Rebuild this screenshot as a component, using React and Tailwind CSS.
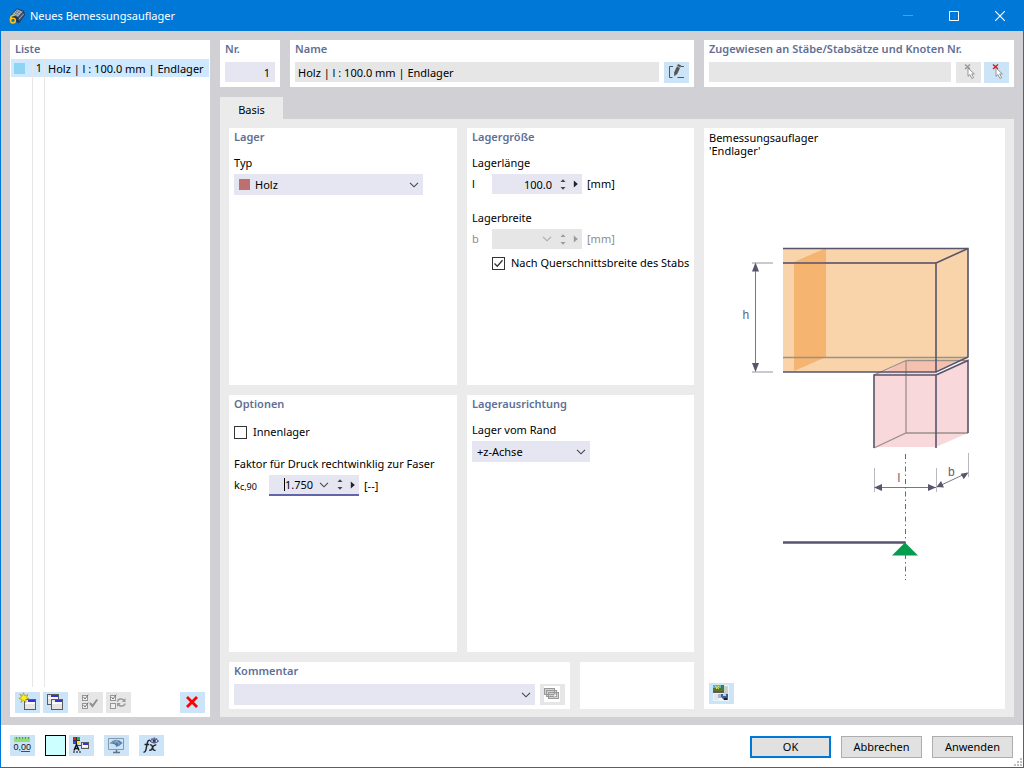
import React, { useState } from 'react';

function Panel({ title, className = '', children }) {
  return (
    <section className={`flex min-w-0 flex-col bg-white px-[5px] ${className}`}>
      {title && <h2 className="h-[19px] text-[11px] leading-[17px] font-semibold text-[#5f6f95]">{title}</h2>}
      {children}
    </section>
  );
}

function IconButton({ label, muted, children }) {
  return (
    <button
      type="button"
      aria-label={label}
      disabled={muted}
      className={`h-[21px] w-[25px] shrink-0 ${muted ? 'bg-[#e6e6e6]' : 'bg-[#cce4f7]'}`}
    >
      <svg width="25" height="21" viewBox="0 0 25 21" fill="none" aria-hidden="true">
        {children}
      </svg>
    </button>
  );
}

function Chevron({ className = '' }) {
  return (
    <svg width="10" height="6" viewBox="0 0 10 6" fill="none" className={className} aria-hidden="true">
      <path d="M1 .8 5 4.8 9 .8" stroke="currentColor" strokeWidth="1.1" />
    </svg>
  );
}

function Select({ id, label, swatch, options, className = '' }) {
  return (
    <div className={`relative flex h-[21px] items-center bg-[#e6e6f2] ${className}`}>
      {swatch && <span className="ml-[5px] size-[11px] shrink-0 bg-[#bc7070]" />}
      <select id={id} aria-label={label} className="h-full min-w-0 flex-1 appearance-none bg-transparent pr-5 pl-[5px] outline-none">
        {options.map((o) => (
          <option key={o}>{o}</option>
        ))}
      </select>
      <Chevron className="pointer-events-none absolute right-1 text-[#444]" />
    </div>
  );
}

function NumberField({ id, value, unit, disabled, list, focus, labelClass, children }) {
  return (
    <div className={`flex items-center ${disabled ? 'text-[#8c8c8c]' : ''}`}>
      <label htmlFor={id} className={`shrink-0 ${labelClass}`}>{children}</label>
      <div
        className={`flex w-[90px] items-center ${focus ? 'h-[21px] border-b-2 border-[#6265a8]' : 'h-5'} ${disabled ? 'bg-[#e6e6e6] text-[#a5a5a5]' : 'bg-[#e6e6f2] text-black'}`}
      >
        <span className="flex min-w-0 flex-1 items-center justify-end">
          {focus && <span className="h-[13px] w-px bg-black" />}
          <input id={id} type="text" defaultValue={value} disabled={disabled} className={`h-5 bg-transparent text-right outline-none ${focus ? 'w-[28px]' : 'w-10'}`} />
        </span>
        {list && (
          <button type="button" aria-label="Werte" disabled={disabled} className="ml-[6px] w-[10px]">
            <Chevron className={disabled ? 'text-[#aaa]' : 'text-[#444]'} />
          </button>
        )}
        <span className="ml-2 flex w-[6px] flex-col gap-[5px]">
          <button type="button" aria-label="Erhöhen" disabled={disabled}>
            <svg className="block" width="6" height="3" viewBox="0 0 6 3" aria-hidden="true"><path d="M.5 3 3 .3 5.500 3Z" fill={disabled ? '#999' : '#444'} /></svg>
          </button>
          <button type="button" aria-label="Verringern" disabled={disabled}>
            <svg className="block" width="6" height="3" viewBox="0 0 6 3" aria-hidden="true"><path d="M.5 0 3 2.700 5.500 0Z" fill={disabled ? '#999' : '#444'} /></svg>
          </button>
        </span>
        <button type="button" aria-label="Mehr" disabled={disabled} className="mr-1 ml-[7px]">
          <svg className="block" width="5" height="8" viewBox="0 0 5 8" aria-hidden="true"><path d="M.8.500 4.800 4 .8 7.500Z" fill={disabled ? '#999' : '#222'} /></svg>
        </button>
      </div>
      <span className="ml-[5px]">{unit}</span>
    </div>
  );
}

function Checkbox({ label, initial, className = '' }) {
  const [on, setOn] = useState(initial);
  return (
    <label className={`flex h-5 items-center gap-[6px] whitespace-nowrap ${className}`}>
      <span className="relative size-[13px] shrink-0">
        <input type="checkbox" checked={on} onChange={() => setOn(!on)} className="block size-[13px] appearance-none border border-[#333] bg-white" />
        {on && (
          <svg className="pointer-events-none absolute inset-0" width="13" height="13" viewBox="0 0 13 13" fill="none" aria-hidden="true">
            <path d="m2.500 6.500 2.800 2.800 5.200-6" stroke="#333" strokeWidth="1.3" />
          </svg>
        )}
      </span>
      <span>{label}</span>
    </label>
  );
}

function MiniWindow({ x, y, w = 12, h = 11 }) {
  return (
    <g transform={`translate(${x} ${y})`} shapeRendering="crispEdges">
      <rect width={w} height={h} fill="#5c5c5c" />
      <rect x="1" y="1" width={w - 2} height={h - 2} fill="#e4e4e4" />
      <rect x={w > 9 ? 4 : 2} y="1" width={w > 9 ? w - 5 : w - 3} height="2" fill="#3434d8" />
      <rect x="1" y="3" width={w - 2} height="2" fill="#fafafa" />
    </g>
  );
}

function CursorGlyph({ cross }) {
  return (
    <>
      <path d="m9 2.500 5 4.500m0-4.500L9 7" stroke={cross} strokeWidth="1.5" />
      <path d="M12 6v8.300l2-1.700 1.900 3.900 1.700-.9-1.900-3.700h2.600Z" fill="#fff" stroke="#808080" strokeWidth=".8" />
    </>
  );
}

function Checks({ second }) {
  return (
    <>
      <g stroke="#969696" fill="#efefef" shapeRendering="crispEdges">
        <rect x="4.5" y="3.5" width="5" height="5" />
        <rect x="4.5" y="11.5" width="5" height="5" />
      </g>
      <path d="m5.500 5 1.500 2 3.300-4.500" stroke="#777" />
      {second && <path d="m5.500 13 1.500 2 3.300-4.500" stroke="#777" />}
    </>
  );
}

function AppIcon() {
  return (
    <svg width="16" height="16" viewBox="0 0 16 16" fill="none" aria-hidden="true">
      <path d="M2 7 8 .3l7 2.700 1 4-6 8.200L5 13Z" fill="#26384f" />
      <path d="m3 6.500 5.300-5.200 5.700 2.400-5 5.300Z" fill="#8593a8" />
      <path d="m4.500 5 4.800 2.500M6 3.600 10.800 6M7.600 2l4.800 2.200" stroke="#dfe3e8" strokeWidth=".8" />
      <path d="M7 7.500 10.800 3M5.300 6.500 9.300 2" stroke="#33475f" strokeWidth=".5" />
      <path d="m9.300 9.500 5.200-5.200.5 2.800-4.800 6.200Z" fill="#4d5b72" />
      <path d="m9.800 11.300 4.900-5.300" stroke="#a9b4c4" strokeWidth=".8" />
      <path d="M5.800 7.300C2.300 7 1.400 9.200 1.400 11.700c0 2 .9 3.200 2.400 3.200S6.300 14 6.300 12.500 5.400 10.300 4 10.300s-2.200.9-2.400 1.700" stroke="#f8c316" strokeWidth="1.6" />
    </svg>
  );
}

function SupportDiagram() {
  return (
    <svg viewBox="0 0 301 350" className="w-full" role="img" aria-label="Endlager">
      <g fill="none">
        <path d="M79 10h185v109l-32 15H79Z" fill="#f9d3aa" />
        <path d="m90 24 32-14v109l-32 14Z" fill="#f5b571" />
        <path d="M170 136 202 122.500h62V195l-32 14H170Z" fill="#f8d8da" />
        <path d="m181 134 21-11.500h62L232 134Z" fill="#f6c0ae" />
        <path d="m233 136 31-15v-2.500L232 133Z" fill="#fff" />
        <g stroke="#9b9089">
          <path d="M79 119.500h185" strokeWidth="1.500" />
          <path d="m170 210 32-15h62M202 195v-72.500M202 122.500h62M170 137l32-14.500" strokeWidth="1.300" />
        </g>
        <path d="M79 25h153" stroke="#7c6a73" strokeWidth="2" />
        <g stroke="#56556c" strokeWidth="1.600">
          <path d="M79 10.500h185v108.500L232 134H79" />
          <path d="m264 10.500-32 14.500V134" />
          <path d="M170 210v-73h62v73M232 137l32-14.500V195" />
        </g>
        <g stroke="#b8b8c0">
          <path d="M48 25h21M48 134h21" strokeWidth="1.500" />
          <path d="M170.500 230v24M232.500 230v24M264.500 215v24" />
        </g>
        <path d="M51.500 27v105M172 249.500h60M233 249l30-14" stroke="#77768b" />
        <g fill="#58566d">
          <path d="m51.500 24.500 3.500 9h-7ZM51.500 134l3.500-9h-7ZM170 249.500l8-3.500v7ZM232 249.500l-8-3.500v7ZM232.500 249l4.500-6 3 6.500ZM264.500 234.500l-7.800 1.200 3 5.600Z" />
        </g>
        <path d="M79 304.500h122" stroke="#56556c" strokeWidth="2.500" />
        <path d="m201 304.500 13 13h-26Z" fill="#039d4d" />
        <path d="M201.500 216v126" stroke="#68677a" strokeDasharray="5 3 1.500 3" />
      </g>
      <g fill="#63626f" fontFamily="Liberation Sans, sans-serif" fontSize="12">
        <text x="38.500" y="81">h</text>
        <text x="193.500" y="244">l</text>
        <text x="244" y="238">b</text>
      </g>
    </svg>
  );
}

const footerButton = 'h-[22px] w-[81px] bg-[#e1e1e1] text-center';

export default function App() {
  return (
    <div className="flex min-h-screen flex-col border border-[#0078d7] bg-[#d1d0d5] font-['Noto_Sans','Open_Sans',sans-serif] text-[11px] leading-4 text-black">
      <header className="flex h-[30px] items-center bg-[#0078d7] pl-2 text-white">
        <AppIcon />
        <h1 className="ml-[5px] flex-1 text-[11px]">Neues Bemessungsauflager</h1>
        <button type="button" aria-label="Minimieren" className="flex h-full w-[46px] items-center justify-center" disabled>
          <svg width="10" height="10" aria-hidden="true"><path d="M0 4.500h10" stroke="#4d9fe2" /></svg>
        </button>
        <button type="button" aria-label="Maximieren" className="flex h-full w-[46px] items-center justify-center">
          <svg width="10" height="10" fill="none" aria-hidden="true"><path d="M.5.5h9v9h-9Z" stroke="#fff" /></svg>
        </button>
        <button type="button" aria-label="Schließen" className="flex h-full w-[46px] items-center justify-center">
          <svg width="10" height="10" fill="none" aria-hidden="true"><path d="m0 0 10 10M10 0 0 10" stroke="#fff" strokeWidth="1.200" /></svg>
        </button>
      </header>

      <main className="flex flex-1 gap-[10px] px-[9px] pt-[9px] pb-2">
        <aside className="flex w-[200px] shrink-0 flex-col bg-white">
          <h2 className="h-[19px] px-[5px] text-[11px] leading-[17px] font-semibold text-[#5f6f95]">Liste</h2>
          <button type="button" className="mx-px flex h-[18px] items-center bg-[#cde8ff] text-left leading-[18px]">
            <span className="flex h-full w-[22px] items-center border-r border-[#e6e6e6] pl-[3px]"><span className="size-[11px] bg-[#8ed5f3]" /></span>
            <span className="flex h-full w-3 items-end justify-end border-r border-[#e6e6e6] pt-px pr-[2px]">1</span>
            <span className="pt-px pl-[3px] whitespace-nowrap">Holz | l : 100.0 mm | Endlager</span>
          </button>
          <div className="mx-px flex flex-1">
            <span className="w-[22px] border-r border-[#e6e6e6]" />
            <span className="w-3 border-r border-[#e6e6e6]" />
          </div>
          <div className="flex px-[5px] pt-[5px] pb-1">
            <div className="flex gap-[3px]">
              <IconButton label="Neu">
                <MiniWindow x={9} y={7} />
                <path d="m8.500.8 1.300 3L13 2.500l-1.500 3 2.500 1.300-3.200.5.200 3.200-2.400-2.200L6 10.500l.8-3.200-3-.8L6.500 5 4.800 2l2.800 1.700Z" fill="#ffee1f" stroke="#8d842c" strokeWidth=".6" />
              </IconButton>
              <IconButton label="Kopieren">
                <MiniWindow x={4} y={2} />
                <MiniWindow x={8} y={7} />
              </IconButton>
            </div>
            <div className="ml-[10px] flex gap-[3px]">
              <IconButton label="Alle auswählen" muted>
                <Checks second />
                <path d="m12 11 2.500 3 4.700-6.500" stroke="#929292" strokeWidth="2" />
              </IconButton>
              <IconButton label="Auswahl umkehren" muted>
                <Checks />
                <path d="M11.500 9.500C12 6.500 16.500 6 18 8.500M19 11.500c-.5 3-5 3.500-6.500 1" stroke="#989898" strokeWidth="1.500" />
                <path d="M19.500 6v4H16ZM11 15v-4h3.500Z" fill="#989898" />
              </IconButton>
            </div>
            <div className="ml-auto flex">
              <IconButton label="Löschen"><path d="m7 5 10 10M17 5 7 15" stroke="#f00" strokeWidth="2.800" /></IconButton>
            </div>
          </div>
        </aside>

        <div className="flex min-w-0 flex-1 flex-col">
          <div className="grid grid-cols-[60px_404fr_310fr] gap-[10px]">
            <Panel title="Nr." className="pb-1">
              <input aria-label="Nr." defaultValue="1" className="mt-[3px] h-5 w-full bg-[#e6e6f2] pr-[5px] text-right outline-none" />
            </Panel>
            <Panel title="Name" className="pb-1">
              <div className="mt-[3px] flex gap-[5px]">
                <input aria-label="Name" defaultValue="Holz | l : 100.0 mm | Endlager" className="h-5 min-w-0 flex-1 bg-[#e6e6e6] pl-[3px] outline-none" />
                <IconButton label="Name bearbeiten">
                  <path d="M9 4.500H5.500v11h3M17 4.500H20M13.500 15.500H20" stroke="#555" />
                  <path d="m14 2 3.200 1.600-4 8.400-2.900 2.300-.2-3.900Z" fill="#555" />
                  <path d="m13 4.200 3 1.500" stroke="#cce4f7" strokeWidth=".7" />
                </IconButton>
              </div>
            </Panel>
            <Panel title="Zugewiesen an Stäbe/Stabsätze und Knoten Nr." className="pb-1">
              <div className="mt-[3px] flex">
                <input aria-label="Zugewiesen an Stäbe/Stabsätze und Knoten Nr." className="h-5 min-w-0 flex-1 bg-[#e6e6e6] outline-none" />
                <div className="ml-[5px] flex gap-[3px]">
                  <IconButton label="Auswählen" muted><CursorGlyph cross="#999" /></IconButton>
                  <IconButton label="Neu auswählen"><CursorGlyph cross="#e51717" /></IconButton>
                </div>
              </div>
            </Panel>
          </div>

          <div role="tablist" className="mt-[10px] flex">
            <button type="button" role="tab" aria-selected="true" className="h-[22px] w-[63px] bg-[#ebebeb] pt-1">Basis</button>
          </div>

          <div className="grid flex-1 grid-cols-[465fr_301fr] gap-[10px] bg-[#ebebeb] px-[9px] pt-[9px] pb-2">
            <div className="flex min-w-0 flex-col gap-[10px]">
              <div className="grid flex-1 grid-cols-[228fr_227fr] grid-rows-2 gap-[10px]">
                <Panel title="Lager">
                  <label htmlFor="typ" className="mt-2">Typ</label>
                  <Select id="typ" swatch options={['Holz']} className="mt-[3px] mr-[29px]" />
                </Panel>
                <Panel title="Lagergröße">
                  <span className="mt-2 mb-[3px]">Lagerlänge</span>
                  <NumberField id="len" value="100.0" unit="[mm]" labelClass="w-5">l</NumberField>
                  <span className="mt-4 mb-[3px]">Lagerbreite</span>
                  <NumberField id="wid" value="" unit="[mm]" labelClass="w-5" disabled list>b</NumberField>
                  <Checkbox label="Nach Querschnittsbreite des Stabs" initial className="mt-1 ml-5" />
                </Panel>
                <Panel title="Optionen">
                  <Checkbox label="Innenlager" initial={false} className="mt-2" />
                  <span className="mt-[14px] mb-[3px]">Faktor für Druck rechtwinklig zur Faser</span>
                  <NumberField id="kc" value="1.750" unit="[--]" labelClass="w-[35px]" focus list>
                    k<span className="relative top-px text-[9px]">c,90</span>
                  </NumberField>
                </Panel>
                <Panel title="Lagerausrichtung">
                  <label htmlFor="rand" className="mt-2">Lager vom Rand</label>
                  <Select id="rand" options={['+z-Achse']} className="mt-[3px] w-[118px]" />
                </Panel>
              </div>
              <div className="grid grid-cols-[341fr_114fr] gap-[10px]">
                <Panel title="Kommentar" className="pb-1">
                  <div className="mt-[3px] flex gap-[5px]">
                    <Select label="Kommentar" options={['']} className="min-w-0 flex-1" />
                    <IconButton label="Kommentare" muted>
                      <path d="M4 2h16v16H4Z" fill="#fff" />
                      <g fill="#d2d2d2" stroke="#989898" shapeRendering="crispEdges">
                        <path d="M4.500 4.500h10v6h-10ZM6.500 6.500h10v6h-10ZM8.500 8.500h10v6h-10Z" />
                      </g>
                      <path d="m14 9.500 3 2-3 2Z" fill="#fff" stroke="#999" strokeWidth=".5" />
                    </IconButton>
                  </div>
                </Panel>
                <Panel />
              </div>
            </div>
            <section className="flex min-w-0 flex-col bg-white pb-[5px]">
              <p className="px-[5px] pt-[3px] leading-[13px]">Bemessungsauflager<br />&#39;Endlager&#39;</p>
              <div className="flex flex-1 flex-col pt-[81px]"><SupportDiagram /></div>
              <div className="flex px-[5px]">
                <IconButton label="Bild speichern">
                  <path d="M4 2h16v16H4Z" fill="#eef3f7" />
                  <path d="M4 2h11v7H4Z" fill="#477a3c" />
                  <path d="M4 2h8v3H4Z" fill="#58b6c9" />
                  <path d="m6 3 4 3M10 3 7 6" stroke="#e6df5a" />
                  <path d="M4 8h11v2H4Z" fill="#6b5b43" />
                  <path d="M15 3h4v8h-4Z" fill="#c8d0c8" />
                  <path d="M5 11h4v6H5Z" fill="#dfe6ef" />
                  <path d="M9 11h3v4H9Z" fill="#a9b8cc" />
                  <path d="M12 11h7v6h-4l-3-3Z" fill="#3a6296" />
                  <path d="M14 11h3v2h-3Z" fill="#bcd3ea" />
                  <path d="M15 15h3v2h-3Z" fill="#101e38" />
                </IconButton>
              </div>
            </section>
          </div>
        </div>
      </main>

      <footer className="flex h-[42px] shrink-0 items-start bg-white pt-[10px] pl-[9px]">
        <IconButton label="Einheiten">
          <path d="M4 2h16v5H4Z" fill="#91dc7d" />
          <path d="M6.500 2v2M9.500 2v2M12.500 2v2M15.500 2v2M18.500 2v2" stroke="#57a047" />
          <text x="3.500" y="15" fontSize="9" fontFamily="Liberation Sans Narrow, Liberation Sans, sans-serif" fill="#111">0,00</text>
          <path d="M11 16.500h9" stroke="#344d86" />
        </IconButton>
        <button type="button" aria-label="Farbe" className="ml-[10px] size-[21px] border border-black bg-[#ccffff]" />
        <div className="ml-[3px] flex gap-[10px]">
          <IconButton label="Darstellung">
            <path d="M4 2h7v7H4Z" fill="#333" />
            <path d="M4 2h3v3H4Z" fill="#f11" />
            <path d="M8 2h3v3H8Z" fill="#1dbb25" />
            <path d="M4 6h3v3H4Z" fill="#2941e8" />
            <path d="M8 6h3v3H8Z" fill="#ffe61a" />
            <path d="m5 15.500 2.500-6 2.500 6M5.800 13.500h3.400" stroke="#111" strokeWidth="1.500" />
            <path d="M4 17h2M7 17h2M10 17h2" stroke="#111" />
            <path d="M9 10.500h4" stroke="#444" />
            <MiniWindow x={12} y={7} w={8} h={7} />
          </IconButton>
          <IconButton label="Ansicht">
            <path d="M4.500 3.500h15v11h-15Z" stroke="#8798a8" />
            <path d="M12.500 15v2M9 17.500h7" stroke="#66717c" strokeWidth="1.500" />
            <path d="M5.500 8.500Q12 1.500 18.500 8L15 11Q14 10 12.500 12.500Q12.500 8.500 5.500 8.500Z" fill="#4c7aa5" />
            <path d="M7 8.500q5-4.500 9.500.5M12.500 5 11 9M13 5l2 5" stroke="#a9c4dc" strokeWidth=".6" />
          </IconButton>
          <IconButton label="Formel">
            <path d="M4.500 17c1.500.5 2.200-1 2.600-3L8.300 8C8.700 5.800 9.700 4.800 11 5.300M5.500 9.500h4.700" stroke="#252525" strokeWidth="1.400" />
            <path d="M11 10c2-.6 2.200.8 2.700 3 .4 2 1 2.800 2.800 2.200M17.300 10.200c-2-.8-3.200 1.300-4 2.700-.7 1.800-1.500 2.800-3 2.100" stroke="#252525" strokeWidth="1.400" />
            <path d="M11 6q4.300-4.500 8.500 0-4.200 4-8.500 0Z" fill="#d6d5ef" stroke="#353968" />
            <path d="M12.500 3 13.300 4.200M15.200 2V3.500M18 3 17.300 4.200" stroke="#353968" strokeWidth=".6" />
            <circle cx="15.200" cy="5.800" r="1.600" fill="#31356b" />
          </IconButton>
        </div>
        <div className="mt-px mr-[10px] ml-auto flex gap-[10px]">
          <button type="button" className={`${footerButton} border-2 border-[#0078d7]`}>OK</button>
          <button type="button" className={`${footerButton} border border-[#adadad]`}>Abbrechen</button>
          <button type="button" className={`${footerButton} border border-[#adadad]`}>Anwenden</button>
        </div>
        <svg className="-ml-[10px] self-end" width="10" height="10" viewBox="0 0 10 10" aria-hidden="true">
          <path d="M7 1h2v2H7ZM4 4h2v2H4ZM7 4h2v2H7ZM1 7h2v2H1ZM4 7h2v2H4ZM7 7h2v2H7Z" fill="#bfbfbf" />
        </svg>
      </footer>
    </div>
  );
}
